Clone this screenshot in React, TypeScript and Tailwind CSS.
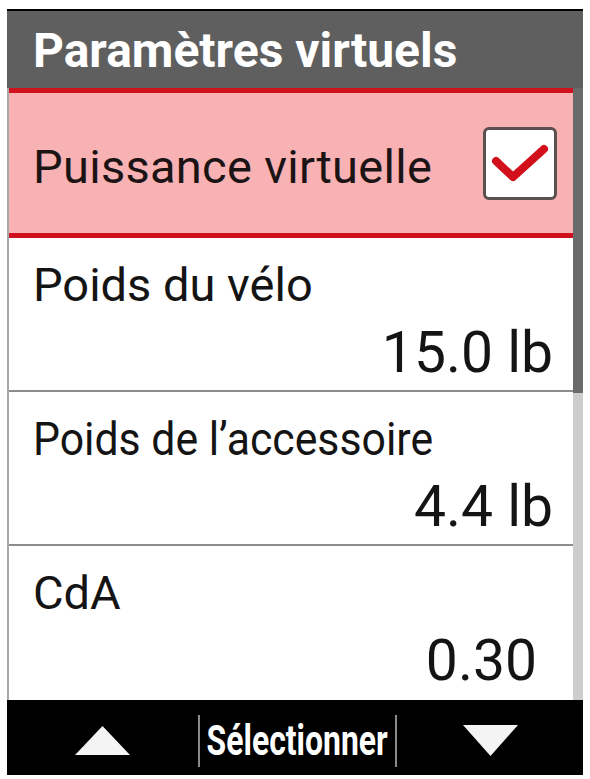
import React from 'react';

const rows = [
  { label: 'Poids du vélo', value: '15.0 lb', fit: '', pad: 'pr-[20px]' },
  { label: 'Poids de l’accessoire', value: '4.4 lb', fit: 'scale-x-[0.91] origin-left', pad: 'pr-[20px]' },
  { label: 'CdA', value: '0.30', fit: '', pad: 'pr-[36px]' },
];

export default function App() {
  return (
    <div
      className="w-[590px] h-[779px] bg-white pt-[9px] pl-[7px]"
      style={{ fontFamily: 'Roboto, "Liberation Sans", sans-serif' }}
    >
      <div className="w-[576px] flex flex-col">
        {/* title bar */}
        <div className="h-[79px] bg-[#5f5f5f] border-t-2 border-black flex items-center pl-[26px] pt-[2px]">
          <span className="text-white font-bold text-[48px] leading-none">
            Paramètres virtuels
          </span>
        </div>

        <div className="flex">
          {/* list */}
          <div className="flex-1 flex flex-col border-l-2 border-[#a8a8a8]">
            <div className="h-[150px] bg-[#f8b2b4] border-y-[5px] border-[#cf111d] flex items-center justify-between pl-[24px] pr-[16px]">
              <span className="text-[#1c1414] text-[47px] leading-none pt-[6px] tracking-[0.3px]">Puissance virtuelle</span>
              <div className="w-[74px] h-[73px] bg-white border-[3px] border-[#5a5050] rounded-[6px] flex items-center justify-center">
                <svg width="58" height="44" viewBox="0 0 58 44">
                  <path
                    d="M5 20 L22 36 L53 8"
                    fill="none"
                    stroke="#d1101c"
                    strokeWidth="8"
                    strokeLinecap="round"
                    strokeLinejoin="round"
                  />
                </svg>
              </div>
            </div>

            {rows.map((r) => (
              <div
                key={r.label}
                className="h-[154px] border-b-2 border-[#8c8c8c] flex flex-col items-start pl-[24px] pt-[23px] last:border-b-0"
              >
                <span className={`text-[#141414] text-[47px] leading-none whitespace-nowrap inline-block ${r.fit}`}>
                  {r.label}
                </span>
                <span className={`text-[#141414] text-[57px] leading-none self-end mt-[16px] ${r.pad}`}>
                  {r.value}
                </span>
              </div>
            ))}
          </div>

          {/* scrollbar */}
          <div className="w-[10px] bg-[#cdcdcd] flex flex-col">
            <div className="h-[305px] bg-[#6a6a6a]" />
          </div>
        </div>

        {/* soft-key bar */}
        <div className="h-[75px] bg-black flex items-center pt-[6px]">
          <div className="w-[191px] flex justify-center">
            <svg width="55" height="29" viewBox="0 0 55 29">
              <polygon points="27.5,0 55,29 0,29" fill="#f4f4f4" />
            </svg>
          </div>
          <div className="w-[2px] h-[52px] bg-[#8a8a8a]" />
          <div className="w-[195px] flex justify-center">
            <span className="text-white font-bold text-[42px] leading-none scale-x-[0.76] inline-block whitespace-nowrap">
              Sélectionner
            </span>
          </div>
          <div className="w-[2px] h-[52px] bg-[#8a8a8a]" />
          <div className="flex-1 flex justify-center">
            <svg width="55" height="31" viewBox="0 0 55 31">
              <polygon points="0,0 55,0 27.5,31" fill="#f4f4f4" />
            </svg>
          </div>
        </div>
      </div>
    </div>
  );
}
